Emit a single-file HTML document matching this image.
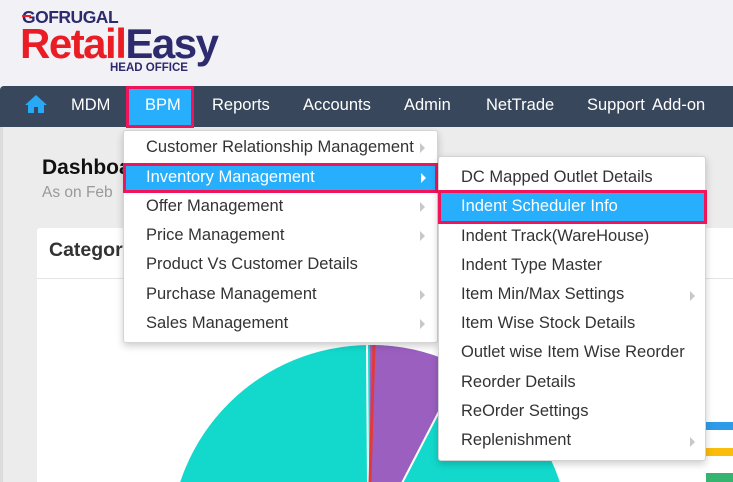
<!DOCTYPE html>
<html><head><meta charset="utf-8"><style>
*{margin:0;padding:0;box-sizing:border-box}
html,body{width:733px;height:482px;overflow:hidden}
body{position:relative;background:#ececec;font-family:"Liberation Sans",sans-serif}
.abs{position:absolute}
.t{position:absolute;white-space:nowrap}
.nav .t{color:#fff;font-size:16.5px;top:96px}
.m{position:absolute;background:#fff;border:1px solid #d4d4d4;border-radius:3px;box-shadow:0 3px 8px rgba(0,0,0,.2)}
.m .t{font-size:16.5px;color:#333}
.arr{position:absolute;width:0;height:0;border-top:5px solid transparent;border-bottom:5px solid transparent;border-left:5px solid #c8c8c8}
</style></head><body>
<div class="abs" style="left:0;top:0;width:733px;height:86px;background:#f1f1f6"></div>
<div class="t" style="left:22px;top:7px;font-size:17.5px;font-weight:bold;color:#2d2a6e;letter-spacing:-0.5px">GOFRUGAL</div>
<div class="abs" style="left:22px;top:15px;width:9px;height:2px;background:#e8202a"></div>
<div class="t" style="left:20px;top:21px;font-size:42px;font-weight:bold;letter-spacing:-1.5px;line-height:46px"><span style="color:#ea1c24">Retail</span><span style="color:#2d2a6e">Easy</span></div>
<div class="t" style="left:110px;top:62px;font-size:11.5px;font-weight:bold;color:#2d2a6e">HEAD OFFICE</div>
<div class="abs" style="left:0;top:86px;width:733px;height:41px;background:#38475b;border-radius:4px 0 0 0"></div>
<div class="nav">
<svg class="abs" style="left:24px;top:94px" width="24" height="20" viewBox="0 0 24 20"><path d="M12 1L1 11h3v8h6v-6h4v6h6v-8h3z" fill="#29a8f5"/></svg>
<div class="t" style="left:71px">MDM</div>
<div class="abs" style="left:126px;top:86px;width:68px;height:42px;background:#27aefc;border:3px solid #f0145a"></div>
<div class="t" style="left:145px">BPM</div>
<div class="t" style="left:212px">Reports</div>
<div class="t" style="left:303px">Accounts</div>
<div class="t" style="left:404px">Admin</div>
<div class="t" style="left:486px">NetTrade</div>
<div class="t" style="left:587px">Support</div>
<div class="t" style="left:652px">Add-on</div>
</div>
<div class="abs" style="left:0;top:127px;width:3px;height:355px;background:#dcdcdc"></div>
<div class="t" style="left:42px;top:156px;font-size:21px;font-weight:bold;color:#111">Dashboard</div>
<div class="t" style="left:42px;top:184px;font-size:15.5px;color:#999">As on Feb</div>
<div class="abs" style="left:37px;top:228px;width:696px;height:254px;background:#fff;border-radius:3px 0 0 0"></div>
<div class="abs" style="left:37px;top:278px;width:696px;height:1px;background:#e4e4e4"></div>
<div class="t" style="left:49px;top:239px;font-size:19.5px;font-weight:bold;color:#333">Category</div>
<svg class="abs" style="left:0;top:0" width="733" height="482">
<circle cx="370" cy="545" r="200" fill="#12d9cc"/>
<path d="M370 345 L370 545 L462 367 A200 200 0 0 0 370 345Z" fill="#9b5fc0"/>
<path d="M367 345 L368 482" stroke="#fff" stroke-width="2"/>
<path d="M374 345 L370 482" stroke="#e23a3a" stroke-width="3"/>
<path d="M462 367 L370 545" stroke="#fff" stroke-width="2"/>
<rect x="706" y="422" width="27" height="8" fill="#2e9be8"/>
<rect x="706" y="448" width="27" height="8" fill="#fbbd0b"/>
<rect x="706" y="473" width="27" height="9" fill="#34b46e"/>
</svg>
<div class="m" style="left:123px;top:130px;width:315px;height:213px">
<div class="t" style="left:22px;top:7px">Customer Relationship Management</div><div class="arr" style="left:296px;top:12px"></div>
<div class="abs" style="left:-1px;top:32px;width:315px;height:30px;background:#27aefc;border:3px solid #f0145a"></div>
<div class="t" style="left:22px;top:37px;color:#fff">Inventory Management</div><div class="arr" style="left:297px;top:42px;border-left-color:#fff"></div>
<div class="t" style="left:22px;top:66px">Offer Management</div><div class="arr" style="left:296px;top:71px"></div>
<div class="t" style="left:22px;top:95px">Price Management</div><div class="arr" style="left:296px;top:100px"></div>
<div class="t" style="left:22px;top:124px">Product Vs Customer Details</div>
<div class="t" style="left:22px;top:154px">Purchase Management</div><div class="arr" style="left:296px;top:159px"></div>
<div class="t" style="left:22px;top:183px">Sales Management</div><div class="arr" style="left:296px;top:188px"></div>
</div>
<div class="m" style="left:438px;top:156px;width:268px;height:305px">
<div class="t" style="left:22px;top:11px">DC Mapped Outlet Details</div>
<div class="abs" style="left:-1px;top:33px;width:269px;height:34px;background:#27aefc;border:3px solid #f0145a"></div>
<div class="t" style="left:22px;top:40px;color:#fff">Indent Scheduler Info</div>
<div class="t" style="left:22px;top:70px">Indent Track(WareHouse)</div>
<div class="t" style="left:22px;top:99px">Indent Type Master</div>
<div class="t" style="left:22px;top:128px">Item Min/Max Settings</div><div class="arr" style="left:251px;top:134px"></div>
<div class="t" style="left:22px;top:157px">Item Wise Stock Details</div>
<div class="t" style="left:22px;top:186px">Outlet wise Item Wise Reorder</div>
<div class="t" style="left:22px;top:216px">Reorder Details</div>
<div class="t" style="left:22px;top:245px">ReOrder Settings</div>
<div class="t" style="left:22px;top:274px">Replenishment</div><div class="arr" style="left:251px;top:280px"></div>
</div>
</body></html>
